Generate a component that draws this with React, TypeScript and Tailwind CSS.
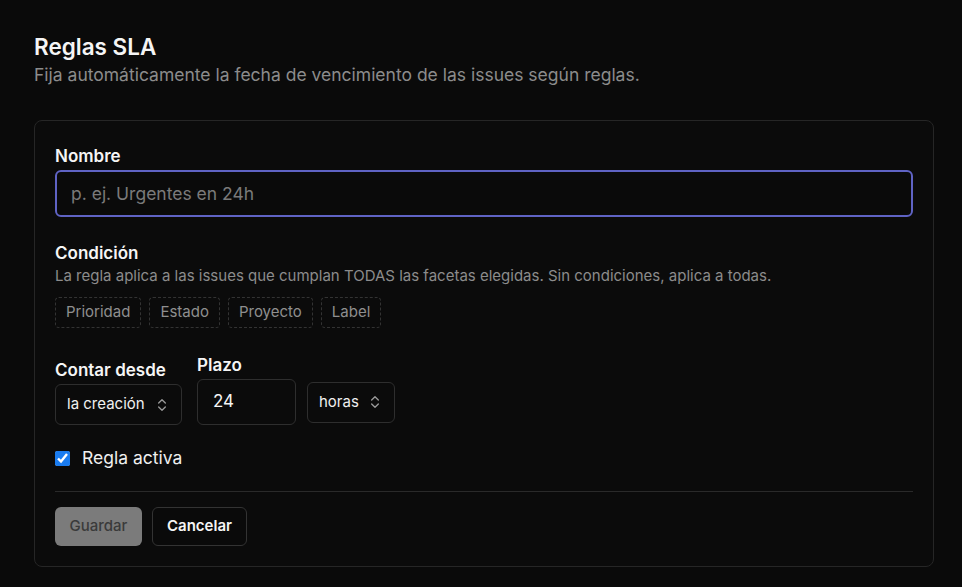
import type { ReactNode } from "react";

function UpDown() {
  return (
    <svg
      viewBox="0 0 24 24"
      className="h-4 w-4 text-[#9a9a9a]"
      fill="none"
      stroke="currentColor"
      strokeWidth={2}
      strokeLinecap="round"
      strokeLinejoin="round"
    >
      <path d="m7 15 5 5 5-5" />
      <path d="m7 9 5-5 5 5" />
    </svg>
  );
}

function Label({ children }: { children: ReactNode }) {
  return <div className="text-[17px] font-semibold leading-6 text-[#f5f5f5]">{children}</div>;
}

function Chip({ children }: { children: ReactNode }) {
  return (
    <span className="flex h-[31px] items-center rounded border border-dashed border-[#333] px-[10px] text-[15px] text-[#8f8f8f]">
      {children}
    </span>
  );
}

function FakeSelect({ value, className = "" }: { value: string; className?: string }) {
  return (
    <div
      className={`flex items-center justify-between rounded-md border border-[#2e2e2e] bg-[#0b0b0b] pl-[11px] pr-[11px] text-[15px] text-[#f0f0f0] ${className}`}
    >
      <span>{value}</span>
      <UpDown />
    </div>
  );
}

export default function App() {
  return (
    <div
      className="min-h-[587px] bg-[#0a0a0a] pl-[34px] pr-[28px] pt-[33px] pb-5 text-white"
      style={{ fontFamily: "Inter, 'Noto Sans', sans-serif" }}
    >
      <h1 className="text-[22.5px] font-semibold leading-7 text-[#f5f5f5]">Reglas SLA</h1>
      <p className="mt-[2px] text-[17.5px] leading-6 text-[#8c8c8c]">
        Fija automáticamente la fecha de vencimiento de las issues según reglas.
      </p>

      <div className="mt-[33px] rounded-lg border border-[#262626] bg-[#0b0b0b] px-5 pt-[23px] pb-5">
        <Label>Nombre</Label>
        <input
          autoFocus
          placeholder="p. ej. Urgentes en 24h"
          className="mt-[2px] block h-[47px] w-full rounded-md border-2 border-[#5f63c4] bg-[#0a0a0a] px-[14px] text-[17.5px] text-white caret-white outline-none placeholder:text-[#7a7a7a]"
        />

        <div className="mt-6">
          <Label>Condición</Label>
          <p className="mt-[1px] text-[15px] leading-5 text-[#8c8c8c]">
            La regla aplica a las issues que cumplan TODAS las facetas elegidas. Sin condiciones, aplica a todas.
          </p>
          <div className="mt-[11px] flex gap-2">
            <Chip>Prioridad</Chip>
            <Chip>Estado</Chip>
            <Chip>Proyecto</Chip>
            <Chip>Label</Chip>
          </div>
        </div>

        <div className="mt-[25px] flex items-end gap-[15px]">
          <div>
            <Label>Contar desde</Label>
            <FakeSelect value="la creación" className="mt-[2px] h-[41px] w-[127px]" />
          </div>
          <div>
            <Label>Plazo</Label>
            <div className="mt-[2px] flex items-center gap-[11px]">
              <div className="flex h-[46px] w-[99px] items-center rounded-md border border-[#2e2e2e] px-[15px] text-[17px] text-[#f5f5f5]">
                24
              </div>
              <FakeSelect value="horas" className="h-[41px] w-[88px]" />
            </div>
          </div>
        </div>

        <label className="mt-[21px] flex items-center gap-3">
          <input type="checkbox" defaultChecked className="h-[15px] w-[15px] accent-[#1a7cf0]" />
          <span className="text-[17.5px] leading-6 text-[#f0f0f0]">Regla activa</span>
        </label>

        <div className="mt-[21px] border-t border-[#2a2a2a]" />

        <div className="mt-[15px] flex gap-[10px]">
          <button className="h-[39px] w-[87px] rounded-md bg-[#7b7b7b] text-[15px] font-medium text-[#3a3a3a]">
            Guardar
          </button>
          <button className="h-[39px] w-[95px] rounded-md border border-[#333] bg-[#0a0a0a] text-[15px] font-semibold text-[#f5f5f5]">
            Cancelar
          </button>
        </div>
      </div>
    </div>
  );
}
